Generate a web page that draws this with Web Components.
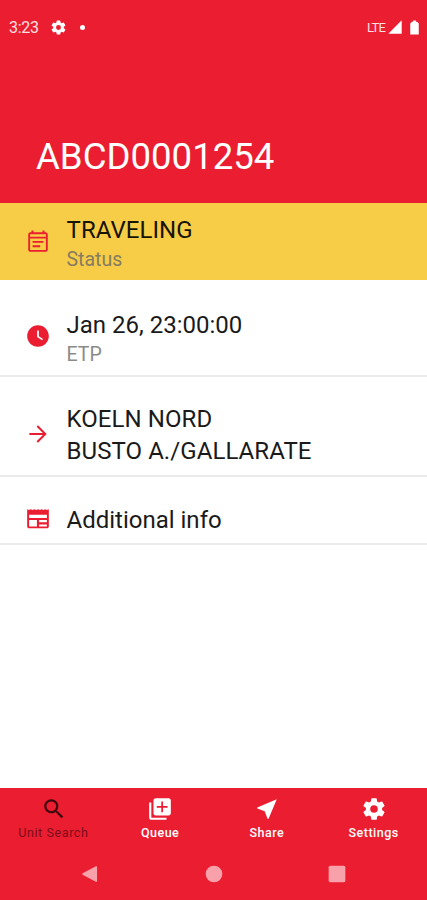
<!DOCTYPE html>
<html lang="en">
<head>
<meta charset="utf-8">
<title>Unit details</title>
<style>
html,body{margin:0;height:100%;background:#fff}
body{font-family:Roboto,"Liberation Sans",sans-serif;overflow:hidden}
</style>
</head>
<body>
<unit-app></unit-app>
<script>
const ICONS = {
  event: '<path d="M19 4h-1V2.200h-1.800V4H7.800V2.200H6V4H5c-1.100 0-2 .9-2 2v14c0 1.100.9 2 2 2h14c1.100 0 2-.9 2-2V6c0-1.100-.9-2-2-2zm.3 16.300H4.700V9.800h14.600zm0-12.200H4.700V5.700h14.600zM7 12h10v1.700H7zm0 4h7v1.700H7z"/>',
  clock: '<path d="M12 2C6.500 2 2 6.500 2 12s4.500 10 10 10 10-4.500 10-10S17.500 2 12 2zm3.800 14L11.200 13V7h1.600v5.200l3.800 2.500z"/>',
  arrow: '<path d="M12 4l-1.300 1.300 5.800 5.800H4v1.800h12.500l-5.800 5.800L12 20l8-8z"/>',
  news: '<path d="M22 3l-1.670 .8L18.670 3 17 3.800 15.330 3l-1.660 .8L12 3l-1.670 .8L8.670 3 7 3.800 5.330 3 3.670 3.800 2 3v16c0 1.100.9 1.600 2 1.600h16c1.100 0 2-.5 2-1.600zM11 19H3.800v-6H11zm9.200 0H13v-2h7.200zm0-4H13v-2h7.200zm0-4H3.800V8h16.400z"/>',
  search: '<path d="M15.500 14h-.79l-.28-.27A6.470 6.470 0 0 0 16 9.500 6.500 6.500 0 1 0 9.500 16c1.610 0 3.090-.59 4.230-1.570l.27.280v.79l5 4.990L20.490 19zm-6 0a4.500 4.500 0 1 1 0-9 4.500 4.500 0 0 1 0 9z"/>',
  queue: '<path d="M4 6H2v14c0 1.100.9 2 2 2h14v-2H4zm16-4H8c-1.100 0-2 .9-2 2v12c0 1.100.9 2 2 2h12c1.100 0 2-.9 2-2V4c0-1.100-.9-2-2-2zm-1 8.800h-4.200V15h-1.600v-4.200H9V9.200h4.200V5h1.600v4.200H19z"/>',
  near: '<path d="M21 3L3 10.530v.98l6.840 2.650L12.480 21h.98z"/>',
  gear: '<path d="M19.430 12.980c.04-.32.070-.64.070-.98s-.03-.66-.07-.98l2.110-1.650c.19-.15.240-.42.120-.64l-2-3.460c-.12-.22-.39-.3-.61-.22l-2.490 1c-.52-.4-1.080-.73-1.690-.98l-.38-2.650A.488.488 0 0 0 14 2h-4c-.25 0-.46.180-.49.420l-.38 2.650c-.61.250-1.170.59-1.690.98l-2.490-1c-.23-.09-.49 0-.61.220l-2 3.460c-.13.220-.07.490.12.640l2.110 1.650c-.04.320-.07.650-.07.980s.03.660.07.980l-2.110 1.650c-.19.150-.24.420-.12.640l2 3.460c.12.220.39.300.61.220l2.490-1c.52.400 1.080.73 1.690.98l.38 2.650c.03.240.24.420.49.420h4c.25 0 .46-.18.49-.42l.38-2.650c.61-.25 1.170-.59 1.690-.98l2.490 1c.23.090.49 0 .61-.22l2-3.460c.12-.22.070-.49-.12-.64zM12 15.500a3.500 3.500 0 1 1 0-7 3.500 3.500 0 0 1 0 7z"/>',
  signal: '<path d="M2 22h20V2z"/>',
  battery: '<path d="M15.700 4H14V2h-4v2H8.300L6 6.300V22h12V6.300z"/>',
  back: '<path d="M20.500 3.600v16.800q0 1.500-1.500.8L3.200 13Q2 12 3.200 11L19 2.800q1.500-.7 1.500.8z"/>',
  home: '<circle cx="12" cy="12" r="10"/>',
  recent: '<rect x="2" y="2" width="20" height="20" rx="2"/>'
};

class UiIcon extends HTMLElement {
  constructor() { super(); this.attachShadow({mode: 'open'}); }
  connectedCallback() {
    this.shadowRoot.innerHTML = `<style>
      :host{display:block;flex:none;width:var(--icon,26px);height:var(--icon,26px)}
      svg{display:block;width:100%;height:100%;fill:currentColor}
    </style><svg viewBox="0 0 24 24">${ICONS[this.getAttribute('name')]}</svg>`;
  }
}

class StatusBar extends HTMLElement {
  constructor() {
    super();
    this.attachShadow({mode: 'open'}).innerHTML = `<style>
      :host{display:flex;align-items:center;height:54px;padding:0 4px 0 9px;color:#ffe0e2;font-size:16px;box-sizing:border-box}
      .time{letter-spacing:-.3px;width:41px;padding-top:1px}
      .gear{--icon:17px;color:#fff}
      .dot{width:5px;height:5px;border-radius:50%;background:#fff;margin-left:13px}
      .lte{margin-left:auto;font-size:13px;letter-spacing:-.8px;margin-right:2px}
      .sig{--icon:16px;color:#fff;margin-right:3px}
      .bat{--icon:17px;color:#fff}
    </style>
    <span class="time">3:23</span><ui-icon class="gear" name="gear"></ui-icon><span class="dot"></span>
    <span class="lte">LTE</span><ui-icon class="sig" name="signal"></ui-icon><ui-icon class="bat" name="battery"></ui-icon>`;
  }
}

class AppHeader extends HTMLElement {
  constructor() {
    super();
    this.attachShadow({mode: 'open'}).innerHTML = `<style>
      :host{display:flex;flex-direction:column;height:203px;background:#ea1d31;color:#fff;flex:none}
      h1{margin:80px 0 0 36px;font-size:36.600px;line-height:46px;font-weight:400;white-space:nowrap}
    </style><status-bar></status-bar><h1><slot></slot></h1>`;
  }
}

class InfoRow extends HTMLElement {
  constructor() { super(); this.attachShadow({mode: 'open'}); }
  connectedCallback() {
    this.shadowRoot.innerHTML = `<style>
      :host{display:flex;align-items:center;box-sizing:border-box;padding:var(--pad,0) 0 0 24.500px;gap:16px;
        border-bottom:2px solid #ebebeb;color:#1a1a1a;flex:none}
      :host([highlight]){background:#f7cc46;border-color:#f7cc46;color:#161307}
      ui-icon{color:#ea1d31}
      .text{display:flex;flex-direction:column;font-size:24px;line-height:32px;white-space:nowrap;padding-top:var(--text-drop,0)}
      ::slotted([slot=caption]){font-size:19.500px;line-height:27px;color:#8a8a8a}
      :host([highlight]) ::slotted([slot=caption]){color:#857c62}
    </style><ui-icon name="${this.getAttribute('icon')}"></ui-icon>
    <div class="text"><slot></slot><slot name="caption"></slot></div>`;
  }
}

class NavTab extends HTMLElement {
  constructor() { super(); this.attachShadow({mode: 'open'}); }
  connectedCallback() {
    this.shadowRoot.innerHTML = `<style>
      :host{display:flex;flex-direction:column;align-items:center;flex:1;color:#fff;font-size:12.500px;line-height:16px;font-weight:500;
        letter-spacing:.5px;padding-top:8px;white-space:nowrap}
      :host([active]){color:#7d0d18;font-weight:400;letter-spacing:.6px}
      :host([active]) ui-icon{color:#3d070d;padding-left:1px}
      span{margin-top:3px}
    </style><ui-icon name="${this.getAttribute('icon')}"></ui-icon><span><slot></slot></span>`;
  }
}

class SystemNav extends HTMLElement {
  constructor() {
    super();
    this.attachShadow({mode: 'open'}).innerHTML = `<style>
      :host{display:flex;height:52px;align-items:center;justify-content:space-between;padding:0 80px;color:#f8a1aa;--icon:20px;box-sizing:border-box}
    </style><ui-icon name="back"></ui-icon><ui-icon name="home"></ui-icon><ui-icon name="recent"></ui-icon>`;
  }
}

class BottomBar extends HTMLElement {
  constructor() {
    super();
    this.attachShadow({mode: 'open'}).innerHTML = `<style>
      :host{display:block;margin-top:auto;height:112px;background:#ea1d31;flex:none}
      nav{display:flex;height:60px}
    </style><nav><slot></slot></nav><system-nav></system-nav>`;
  }
}

class UnitApp extends HTMLElement {
  constructor() {
    super();
    this.attachShadow({mode: 'open'}).innerHTML = `<style>
      :host{display:flex;flex-direction:column;width:427px;height:900px;background:#fff}
      .status{height:77px;--text-drop:5px}
      .etp{height:97px;--pad:17px;--text-drop:5px}
      .route{height:100px;--pad:15px;--text-drop:3px}
      .more{height:68px;--pad:18px;--text-drop:1px}
      .wide{letter-spacing:.07px}
    </style>
    <app-header>ABCD0001254</app-header>
    <info-row class="status" icon="event" highlight><span class="wide">TRAVELING</span><span slot="caption">Status</span></info-row>
    <info-row class="etp" icon="clock"><span>Jan 26, 23:00:00</span><span slot="caption">ETP</span></info-row>
    <info-row class="route" icon="arrow"><span class="wide">KOELN NORD</span><span class="wide">BUSTO A./GALLARATE</span></info-row>
    <info-row class="more" icon="news"><span>Additional info</span></info-row>
    <bottom-bar>
      <nav-tab icon="search" active>Unit Search</nav-tab>
      <nav-tab icon="queue">Queue</nav-tab>
      <nav-tab icon="near">Share</nav-tab>
      <nav-tab icon="gear">Settings</nav-tab>
    </bottom-bar>`;
  }
}

customElements.define('ui-icon', UiIcon);
customElements.define('status-bar', StatusBar);
customElements.define('app-header', AppHeader);
customElements.define('info-row', InfoRow);
customElements.define('nav-tab', NavTab);
customElements.define('system-nav', SystemNav);
customElements.define('bottom-bar', BottomBar);
customElements.define('unit-app', UnitApp);
</script>
</body>
</html>
